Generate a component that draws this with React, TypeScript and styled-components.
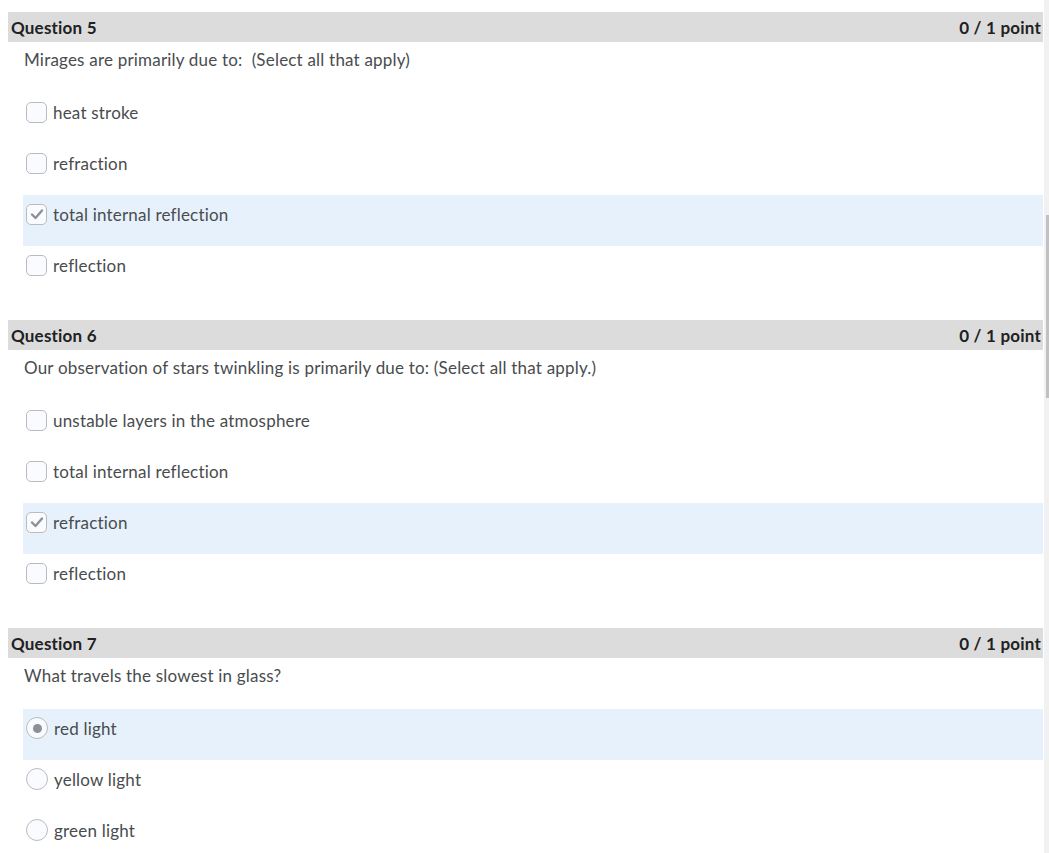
import React from "react";
import styled, { createGlobalStyle } from "styled-components";

const Global = createGlobalStyle`
  html, body { margin: 0; padding: 0; background: #ffffff; overflow: hidden; }
  body { font-family: Lato, "Noto Sans", sans-serif; letter-spacing: 0.2px; }
`;

const Page = styled.div`
  display: flex;
  width: 1049px;
  height: 853px;
  overflow: hidden;
`;

const Main = styled.div`
  flex: 1;
  padding: 12px 1px 0 8px;
  display: flex;
  flex-direction: column;
  gap: 23px;
`;

const ScrollTrack = styled.div`
  width: 5px;
  background: #f1f1f1;
  padding-top: 215px;
  box-sizing: border-box;
`;

const ScrollThumb = styled.div`
  margin-left: 2px;
  width: 3px;
  height: 183px;
  background: #c1c1c1;
`;

const Block = styled.section`
  display: flex;
  flex-direction: column;
`;

const Header = styled.div`
  display: flex;
  justify-content: space-between;
  align-items: center;
  height: 30px;
  padding: 0 2px 0 3px;
  background: #dcdcdc;
  color: #202122;
  font-weight: 700;
  font-size: 17px;
`;

const Prompt = styled.div`
  padding: 7px 0 0 16px;
  height: 44px;
  color: #494c4e;
  font-size: 17px;
  line-height: 22px;
`;

const Options = styled.div`
  display: flex;
  flex-direction: column;
  padding-left: 15px;
`;

const Row = styled.div<{ $selected?: boolean }>`
  display: flex;
  align-items: center;
  gap: 6px;
  height: 51px;
  box-sizing: border-box;
  padding: 8px 0 21px 3px;
  background: ${(p) => (p.$selected ? "#e7f1fc" : "transparent")};
  color: #494c4e;
  font-size: 17px;
`;

const Box = styled.span`
  width: 21px;
  height: 21px;
  box-sizing: border-box;
  border: 1px solid #b9bcbf;
  border-radius: 5px;
  background: #f9fbff;
  display: flex;
  align-items: center;
  justify-content: center;
  flex-shrink: 0;
`;

const Circle = styled.span`
  width: 22px;
  height: 22px;
  box-sizing: border-box;
  border: 1px solid #b9bcbf;
  border-radius: 50%;
  background: #f9fbff;
  display: flex;
  align-items: center;
  justify-content: center;
  flex-shrink: 0;
`;

const Dot = styled.span`
  width: 9px;
  height: 9px;
  border-radius: 50%;
  background: #8d9196;
`;

const Check = () => (
  <svg width="14" height="12" viewBox="0 0 14 12">
    <path d="M2 6.5 L5.5 10 L12 2.5" fill="none" stroke="#8d9196" strokeWidth="2.4" strokeLinecap="round" strokeLinejoin="round" />
  </svg>
);

type Opt = { label: string; selected?: boolean };
type Q = { n: number; prompt: string; kind: "check" | "radio"; options: Opt[] };

const questions: Q[] = [
  {
    n: 5,
    prompt: "Mirages are primarily due to:\u00a0 (Select all that apply)",
    kind: "check",
    options: [
      { label: "heat stroke" },
      { label: "refraction" },
      { label: "total internal reflection", selected: true },
      { label: "reflection" },
    ],
  },
  {
    n: 6,
    prompt: "Our observation of stars twinkling is primarily due to: (Select all that apply.)",
    kind: "check",
    options: [
      { label: "unstable layers in the atmosphere" },
      { label: "total internal reflection" },
      { label: "refraction", selected: true },
      { label: "reflection" },
    ],
  },
  {
    n: 7,
    prompt: "What travels the slowest in glass?",
    kind: "radio",
    options: [
      { label: "red light", selected: true },
      { label: "yellow light" },
      { label: "green light" },
    ],
  },
];

export default function App() {
  return (
    <>
      <Global />
      <Page>
        <Main>
          {questions.map((q) => (
            <Block key={q.n}>
              <Header>
                <span>Question {q.n}</span>
                <span>0 / 1 point</span>
              </Header>
              <Prompt>{q.prompt}</Prompt>
              <Options>
                {q.options.map((o) => (
                  <Row key={o.label} $selected={o.selected}>
                    {q.kind === "check" ? (
                      <Box>{o.selected && <Check />}</Box>
                    ) : (
                      <Circle>{o.selected && <Dot />}</Circle>
                    )}
                    <span>{o.label}</span>
                  </Row>
                ))}
              </Options>
            </Block>
          ))}
        </Main>
        <ScrollTrack>
          <ScrollThumb />
        </ScrollTrack>
      </Page>
    </>
  );
}
